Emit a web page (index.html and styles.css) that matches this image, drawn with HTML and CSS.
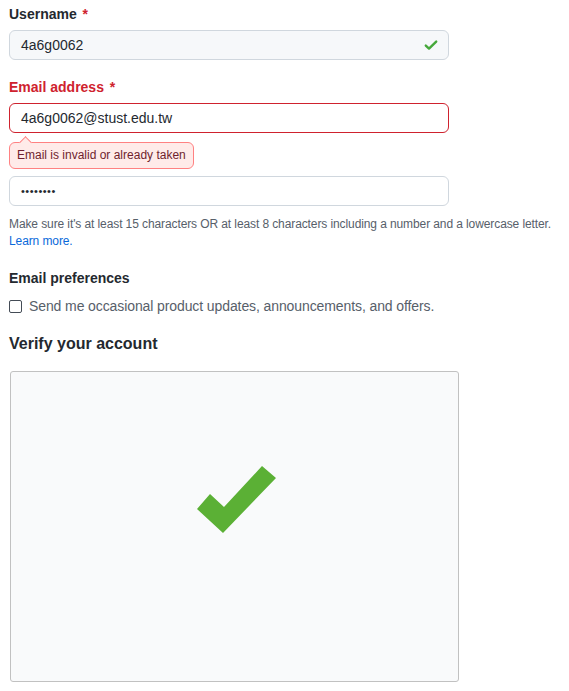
FILE: index.html
```html
<!DOCTYPE html>
<html>
<head>
<meta charset="utf-8">
<link rel="stylesheet" href="styles.css">
</head>
<body>
<form class="form">
  <div class="field">
    <label class="label">Username <span class="req">*</span></label>
    <div class="input input-ok">
      <span class="value">4a6g0062</span>
      <svg class="ok-icon" width="16" height="16" viewBox="0 0 16 16"><path fill="none" stroke="#45a83a" stroke-width="2.4" stroke-linecap="round" stroke-linejoin="round" d="M2.8 8.6 6 11.6 13.2 4.6"/></svg>
    </div>
  </div>

  <div class="field field-email">
    <label class="label label-error">Email address <span class="req">*</span></label>
    <div class="input input-error"><span class="value">4a6g0062@stust.edu.tw</span></div>
    <div class="tip">Email is invalid or already taken</div>
  </div>

  <div class="field field-pass">
    <div class="input"><span class="value dots">••••••••</span></div>
    <p class="note">Make sure it's at least 15 characters OR at least 8 characters including a number and a lowercase letter. <a class="link" href="#">Learn more.</a></p>
  </div>

  <div class="prefs">
    <div class="label">Email preferences</div>
    <label class="check-row"><span class="checkbox"></span><span class="check-text">Send me occasional product updates, announcements, and offers.</span></label>
  </div>

  <h2 class="verify-title">Verify your account</h2>
  <div class="captcha">
    <svg class="big-check" width="80" height="68" viewBox="0 0 80 68"><polygon fill="#5bb035" points="0,43 13,28 27,41 65,0 79,12 26,67"/></svg>
  </div>
</form>
</body>
</html>
```
FILE: styles.css
```css
html, body {
  margin: 0;
  padding: 0;
  background: #ffffff;
}
body {
  font-family: "Liberation Sans", Arial, sans-serif;
  color: #24292f;
  font-size: 14px;
}
.form {
  padding: 4px 0 0 9px;
  width: 449px;
}
.field {
  display: flex;
  flex-direction: column;
}
.label {
  font-weight: 700;
  font-size: 14px;
  line-height: 20px;
  color: #24292f;
}
.label-error {
  color: #cf222e;
}
.req {
  color: #cf222e;
  margin-left: 2px;
}
.input {
  margin-top: 6px;
  width: 440px;
  height: 30px;
  box-sizing: border-box;
  border: 1px solid #d0d7de;
  border-radius: 6px;
  display: flex;
  align-items: center;
  padding: 0 9px 0 11px;
  background: #ffffff;
}
.input-ok {
  background: #f6f8fa;
  justify-content: space-between;
}
.input-error {
  border-color: #cf222e;
}
.value {
  font-size: 14px;
  color: #24292f;
}
.dots {
  font-size: 11px;
  letter-spacing: 0.5px;
}
.field-email {
  margin-top: 17px;
}
.tip {
  position: relative;
  align-self: flex-start;
  margin-top: 9px;
  padding: 5px 7px;
  font-size: 12px;
  line-height: 15px;
  color: #6f1f2e;
  background: #ffebe9;
  border: 1px solid #ff8182;
  border-radius: 6px;
}
.tip::before {
  content: "";
  position: absolute;
  left: 11px;
  top: -5px;
  width: 8px;
  height: 8px;
  background: #ffebe9;
  border-left: 1px solid #ff8182;
  border-top: 1px solid #ff8182;
  transform: rotate(45deg);
}
.field-pass .input {
  margin-top: 7px;
}
.note {
  margin: 10px 0 0;
  font-size: 12px;
  line-height: 17px;
  color: #57606a;
  width: 560px;
  letter-spacing: -0.1px;
}
.link {
  color: #0969da;
  text-decoration: none;
}
.prefs {
  margin-top: 18px;
}
.check-row {
  display: flex;
  align-items: center;
  gap: 7px;
  margin-top: 8px;
  color: #57606a;
  font-size: 14px;
  line-height: 20px;
}
.check-text {
  letter-spacing: -0.1px;
}
.checkbox {
  width: 11px;
  height: 11px;
  border: 1px solid #444c56;
  border-radius: 2px;
  background: #fff;
  flex: none;
}
.verify-title {
  margin: 16px 0 0;
  font-size: 16px;
  font-weight: 700;
  line-height: 24px;
  color: #24292f;
}
.captcha {
  margin: 15px 0 0 1px;
  width: 449px;
  height: 311px;
  box-sizing: border-box;
  border: 1px solid #c1c1c1;
  border-radius: 3px;
  background: #f9fafb;
  display: flex;
  justify-content: center;
  align-items: flex-start;
  padding-top: 94px;
}
.big-check {
  margin-left: 4px;
}
```
